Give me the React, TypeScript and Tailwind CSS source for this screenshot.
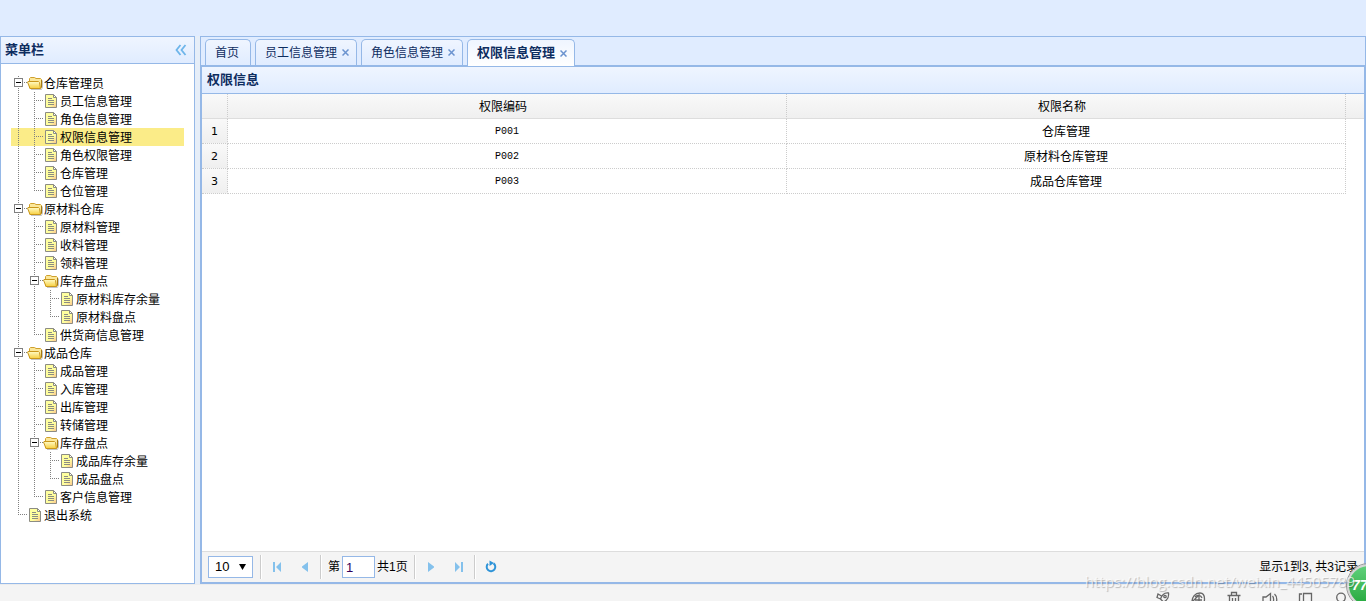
import { useState } from "react";

type TreeNode = {
  label: string;
  children?: TreeNode[];
};

type Permission = {
  code: string;
  name: string;
};

const menu: TreeNode[] = [
  {
    label: "仓库管理员",
    children: [
      { label: "员工信息管理" },
      { label: "角色信息管理" },
      { label: "权限信息管理" },
      { label: "角色权限管理" },
      { label: "仓库管理" },
      { label: "仓位管理" },
    ],
  },
  {
    label: "原材料仓库",
    children: [
      { label: "原材料管理" },
      { label: "收料管理" },
      { label: "领料管理" },
      {
        label: "库存盘点",
        children: [{ label: "原材料库存余量" }, { label: "原材料盘点" }],
      },
      { label: "供货商信息管理" },
    ],
  },
  {
    label: "成品仓库",
    children: [
      { label: "成品管理" },
      { label: "入库管理" },
      { label: "出库管理" },
      { label: "转储管理" },
      {
        label: "库存盘点",
        children: [{ label: "成品库存余量" }, { label: "成品盘点" }],
      },
      { label: "客户信息管理" },
    ],
  },
  { label: "退出系统" },
];

const tabs = ["首页", "员工信息管理", "角色信息管理", "权限信息管理"];

const permissions: Permission[] = [
  { code: "P001", name: "仓库管理" },
  { code: "P002", name: "原材料仓库管理" },
  { code: "P003", name: "成品仓库管理" },
];

// One 16x18 cell of the dotted guide lines
function Guide({ kind }: { kind: "line" | "join" | "elbow" | "blank" }) {
  return (
    <svg width="16" height="18" viewBox="0 0 16 18" className="shrink-0" stroke="#808080" strokeDasharray="1 1">
      {kind !== "blank" && <path d={kind === "elbow" ? "M7.5 0V9" : "M7.5 0V18"} />}
      {(kind === "join" || kind === "elbow") && <path d="M9 8.5H16" />}
    </svg>
  );
}

function Expander({ open, last, first }: { open: boolean; last: boolean; first: boolean }) {
  return (
    <svg width="16" height="18" viewBox="0 0 16 18" className="shrink-0" fill="none" shapeRendering="crispEdges">
      <path d={last ? "M7.5 0V4" : "M7.5 0V18"} stroke="#808080" strokeDasharray="1 1" />
      {first && <path d="M7.5 0V2" stroke="#fff" />}
      <path d="M13 8.5H16" stroke="#808080" strokeDasharray="1 1" />
      <rect x="3.5" y="4.5" width="8" height="8" fill="#fff" stroke="#808080" />
      <path d="M5 8.5H10" stroke="#000" />
      {!open && <path d="M7.5 6V11" stroke="#000" />}
    </svg>
  );
}

function FolderIcon() {
  return (
    <svg width="17" height="18" viewBox="0 0 17 18" className="-mr-px shrink-0">
      <defs>
        <linearGradient id="folder" x1="0" y1="0" x2="0" y2="1">
          <stop offset="0" stopColor="#fffcc8" />
          <stop offset="1" stopColor="#f7cf3f" />
        </linearGradient>
      </defs>
      <path d="M4 15.5H14.5L15.5 13V6.5" fill="none" stroke="#c4c4c4" />
      <path d="M2.5 14V4.5L3.5 3.5H7.5L9 4.5H13.5L14.5 5.5V13L13.5 14.5H3.5Z" fill="#fbe79a" stroke="#cfa02c" />
      <path d="M0.5 8L1 7.5H11.5L12.5 8.5L13.5 14.5H3Z" fill="url(#folder)" stroke="#c9971c" strokeLinejoin="round" />
      <path d="M14.5 6V13.5" stroke="#a67a10" />
    </svg>
  );
}

function FileIcon() {
  return (
    <svg width="16" height="18" viewBox="0 0 16 18" className="shrink-0">
      <defs>
        <linearGradient id="file" x1="0" y1="0" x2="1" y2="1">
          <stop offset="0.6" stopColor="#ffff9e" />
          <stop offset="1" stopColor="#fbc08c" />
        </linearGradient>
      </defs>
      <path d="M2.5 2.5H10.5L13.5 5.5V15.5H2.5Z" fill="url(#file)" stroke="#8c8c84" />
      <path d="M10.5 2.5V5.5H13.5Z" fill="#fff" stroke="#8c8c84" />
      <path d="M5 6.5H9M5 8.5H11M5 10.5H11M5 12.5H11" stroke="#8c8c84" shapeRendering="crispEdges" />
    </svg>
  );
}

function TreeItems({
  nodes,
  trail,
  selected,
  onSelect,
}: {
  nodes: TreeNode[];
  trail: boolean[];
  selected: string;
  onSelect: (label: string) => void;
}) {
  const [closed, setClosed] = useState<string[]>([]);

  const toggle = (label: string) => {
    setClosed(closed.includes(label) ? closed.filter((l) => l !== label) : [...closed, label]);
  };

  return (
    <ul>
      {nodes.map((node, i) => {
        const last = i === nodes.length - 1;
        const open = !closed.includes(node.label);
        return (
          <li key={node.label}>
            <button
              type="button"
              onClick={() => (node.children ? toggle(node.label) : onSelect(node.label))}
              className={`flex h-[18px] w-full cursor-pointer items-center whitespace-nowrap text-left leading-4 ${
                selected === node.label ? "bg-[#fbec88]" : "hover:bg-[#eaf2ff]"
              }`}
            >
              {trail.map((line, n) => (
                <Guide key={n} kind={line ? "line" : "blank"} />
              ))}
              {node.children ? (
                <Expander open={open} last={last} first={i === 0 && trail.length === 0} />
              ) : (
                <Guide kind={last ? "elbow" : "join"} />
              )}
              {node.children ? <FolderIcon /> : <FileIcon />}
              <span className="pl-px pt-0.5">{node.label}</span>
            </button>
            {node.children && open && (
              <TreeItems nodes={node.children} trail={[...trail, !last]} selected={selected} onSelect={onSelect} />
            )}
          </li>
        );
      })}
    </ul>
  );
}

function Separator() {
  return <div className="h-6 w-0.5 border-l border-r border-l-[#ccc] border-r-white" />;
}

function PagerButton({ label, children }: { label: string; children: React.ReactNode }) {
  return (
    <button type="button" aria-label={label} className="flex size-[26px] items-center justify-center">
      <svg width="16" height="16" viewBox="0 0 16 16" fill="#84c1ec">
        {children}
      </svg>
    </button>
  );
}

function Pager() {
  return (
    <div className="flex h-[31px] items-center border-t border-[#ddd] bg-[#f4f4f4] pl-1.5 pr-1.5">
      <div className="flex flex-1 items-center gap-0.5">
        <div className="relative mr-[5px]">
          <select
            aria-label="每页条数"
            className="block h-[22px] w-[45px] appearance-none border border-[#95b8e7] bg-white pl-1.5 font-['Liberation_Sans',sans-serif] text-[13px] leading-5 text-black"
          >
            <option>10</option>
            <option>20</option>
            <option>30</option>
          </select>
          <svg width="7" height="6" viewBox="0 0 7 6" className="pointer-events-none absolute right-[7px] top-2">
            <path d="M0 0H7L3.5 6Z" />
          </svg>
        </div>
        <Separator />
        <PagerButton label="第一页">
          <path d="M4 3H6V13H4ZM12 3V13L7 8Z" />
        </PagerButton>
        <PagerButton label="上一页">
          <path d="M11 3V13L5 8.5V7.5Z" />
        </PagerButton>
        <Separator />
        <label htmlFor="page" className="pl-1">
          第
        </label>
        <input
          id="page"
          defaultValue="1"
          className="h-[22px] w-[33px] border border-[#95b8e7] bg-white px-[3px] font-['Liberation_Sans',sans-serif] text-[13px] text-[#30005a]"
        />
        <span className="pr-1">共1页</span>
        <Separator />
        <PagerButton label="下一页">
          <path d="M5 3V13L11 8.5V7.5Z" />
        </PagerButton>
        <PagerButton label="最后一页">
          <path d="M4 3V13L9 8ZM10 3H12V13H10Z" />
        </PagerButton>
        <Separator />
        <PagerButton label="刷新">
          <path d="M10.5 4.4A4.3 4.3 0 1 1 5 4.8" fill="none" stroke="#2f94d8" strokeWidth="2" />
          <path d="M6.5 1.5L11 4L6.5 7Z" fill="#2f94d8" />
        </PagerButton>
      </div>
      <div>显示1到3, 共3记录</div>
    </div>
  );
}

function StatusIcons() {
  return (
    <div className="flex items-start justify-end gap-5 pr-4 pt-1.5">
      {/* rocket */}
      <svg width="16" height="16" viewBox="0 0 16 16" fill="none" stroke="#666" strokeWidth="1.3">
        <path d="M14.5 2C10.5 1.5 8 3.5 6.5 8L9.5 11C13 9.5 15 6 14.5 2ZM7.5 5L4 3L3 6.5L6.5 8M10.5 10.5V13L8 15V11.5" />
        <circle cx="11" cy="5.5" r="1.2" />
      </svg>
      {/* browser */}
      <svg width="16" height="16" viewBox="0 0 16 16" fill="none" stroke="#666" strokeWidth="1.3">
        <path d="M2 11C2 6 5 2 10 2C13 2 14.5 4 14.5 8C14.5 12 12 14.5 8 14.5M2 11L9 4V11M5 9H12M5 6C7 3.5 11 4 12 7" />
      </svg>
      {/* trash */}
      <svg width="16" height="16" viewBox="0 0 16 16" fill="none" stroke="#666" strokeWidth="1.3">
        <path d="M1.5 4.5H14.5M5.5 4V1.5H10.5V4M3.5 5V15H12.5V5M6.5 7V13M9.5 7V13" />
      </svg>
      {/* speaker */}
      <svg width="16" height="16" viewBox="0 0 16 16" fill="none" stroke="#666" strokeWidth="1.3">
        <path d="M1 6H4L8.5 2.5V15L4 11.5H1ZM10.5 5C12 6.5 12 10.5 10.5 12M12.5 3C15.5 5.5 15.5 11.5 12.5 14" />
      </svg>
      {/* windows */}
      <svg width="16" height="16" viewBox="0 0 16 16" fill="none" stroke="#666" strokeWidth="1.3">
        <path d="M5.5 2.5H13.5V14H5.5ZM4 3H1.5V15" />
      </svg>
      {/* search */}
      <svg width="16" height="16" viewBox="0 0 16 16" fill="none" stroke="#666" strokeWidth="1.3">
        <circle cx="7" cy="6.5" r="4.3" />
        <path d="M10 9.5L14 14" />
      </svg>
    </div>
  );
}

export default function App() {
  const [selected, setSelected] = useState("权限信息管理");

  return (
    <div className="relative flex h-screen flex-col overflow-hidden bg-[#f4f4f4] font-['Liberation_Sans','Noto_Sans_CJK_SC',sans-serif] text-xs text-black">
      <header className="h-9 shrink-0 bg-[#e0ecff]" />

      <div className="flex min-h-0 flex-1 gap-[5px] bg-[#e6eef8]">
        {/* 菜单栏 */}
        <aside className="flex w-[195px] shrink-0 flex-col border border-[#95b8e7] bg-white">
          <div className="flex h-[27px] items-center justify-between border-b border-[#95b8e7] bg-linear-to-b from-[#eff5ff] to-[#e0ecff] pl-1 pr-[7px]">
            <h2 className="text-[13px] font-bold leading-4 text-[#0e2d5f]">菜单栏</h2>
            <button type="button" aria-label="收起">
              <svg width="12" height="12" viewBox="0 0 12 12" fill="none" stroke="#6db5ea" strokeWidth="1.8">
                <path d="M5.5 1L1.5 6L5.5 11M10.5 1L6.5 6L10.5 11" />
              </svg>
            </button>
          </div>
          <nav className="min-h-0 flex-1 overflow-hidden p-2.5">
            <TreeItems nodes={menu} trail={[]} selected={selected} onSelect={setSelected} />
          </nav>
        </aside>

        <main className="flex min-w-0 flex-1 flex-col">
          <div className="flex h-[29px] shrink-0 items-end gap-1 border border-b-0 border-[#95b8e7] bg-[#e0ecff] pl-1">
            {tabs.map((tab, i) => {
              const active = i === tabs.length - 1;
              return (
                <div
                  key={tab}
                  className={`flex items-center rounded-t-[5px] border border-b-0 border-[#95b8e7] pl-[9px] pr-[11px] text-[#0e2d5f] ${
                    active
                      ? "relative -mb-px h-[27px] bg-linear-to-b from-[#eff5ff] to-white text-[13px] font-bold"
                      : "h-[26px] bg-linear-to-b from-[#eff5ff] to-[#e0ecff]"
                  }`}
                >
                  <button type="button" className="leading-4">
                    {tab}
                  </button>
                  {i > 0 && (
                    <button type="button" aria-label={`关闭 ${tab}`} className="-mr-1 ml-[5px]">
                      <svg width="7" height="7" viewBox="0 0 7 7" stroke="#6b93cf" strokeWidth="1.5">
                        <path d="M0.5 0.5L6.5 6.5M6.5 0.5L0.5 6.5" />
                      </svg>
                    </button>
                  )}
                </div>
              );
            })}
          </div>

          <section className="flex min-h-0 flex-1 flex-col border-2 border-[#95b8e7] bg-white">
            <div className="flex h-[27px] shrink-0 items-center border-b border-[#95b8e7] bg-linear-to-b from-[#eff5ff] to-[#e0ecff] pl-[5px]">
              <h1 className="text-[13px] font-bold leading-4 text-[#0e2d5f]">权限信息</h1>
            </div>
            <div className="min-h-0 flex-1 overflow-hidden">
              <table className="w-full table-fixed border-separate border-spacing-0 text-center">
                <colgroup>
                  <col className="w-[26px]" />
                  <col />
                  <col />
                  <col className="w-[18px]" />
                </colgroup>
                <thead>
                  <tr className="h-[25px] bg-linear-to-b from-[#f9f9f9] to-[#efefef]">
                    <td className="border-b border-r border-[#ddd] [border-right:1px_dotted_#ccc]" />
                    <th className="border-b border-[#ddd] pr-2 pt-0.5 font-normal [border-right:1px_dotted_#ccc]">
                      权限编码
                    </th>
                    <th className="border-b border-[#ddd] pr-2 pt-0.5 font-normal [border-right:1px_dotted_#ccc]">
                      权限名称
                    </th>
                    <td className="border-b border-[#ddd]" />
                  </tr>
                </thead>
                <tbody>
                  {permissions.map((item, i) => (
                    <tr key={item.code} className="h-[25px]">
                      <td className="border-b border-r border-dotted border-[#ccc] bg-linear-to-b from-[#f9f9f9] to-[#efefef] pt-0.5 font-['DejaVu_Sans',sans-serif] text-[11px]">
                        {i + 1}
                      </td>
                      <td className="border-b border-r border-dotted border-[#ccc] pt-0.5 font-['Liberation_Mono',monospace] text-[10px]">
                        {item.code}
                      </td>
                      <td className="border-b border-r border-dotted border-[#ccc] pt-0.5">{item.name}</td>
                      <td />
                    </tr>
                  ))}
                </tbody>
              </table>
            </div>
            <Pager />
          </section>
        </main>
      </div>

      <footer className="h-[17px] shrink-0 overflow-hidden border-t border-[#ececec] bg-[#f4f4f4]">
        <StatusIcons />
      </footer>

      <div className="absolute -bottom-1.5 -right-6 flex size-[43px] items-center rounded-full border-2 border-[#d5d5d5] bg-linear-to-b from-[#5fd07a] to-[#22a83c] pl-[3px] text-[14px] font-bold italic text-white outline outline-[#999]">
        77
      </div>
      <p className="pointer-events-none absolute bottom-2.5 right-[11px] font-['Open_Sans',sans-serif] text-[15px] leading-5 text-white/70 [text-shadow:1px_1px_1px_rgb(0_0_0/0.25)]">
        https://blog.csdn.net/weixin_44505789
      </p>
    </div>
  );
}
